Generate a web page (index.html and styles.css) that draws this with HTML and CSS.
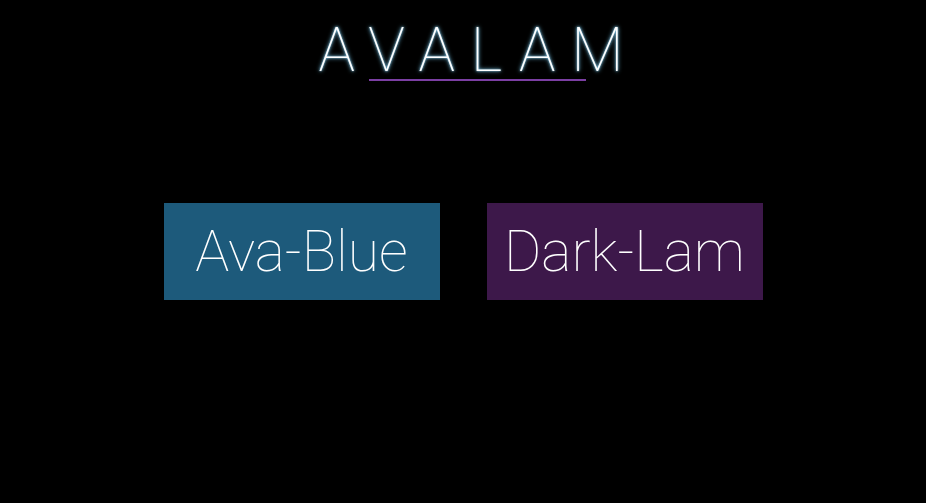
FILE: index.html
```html
<!DOCTYPE html>
<html>
<head>
    <title>Avalam</title>
    <meta name="viewport" content="width=device-width, initial-scale=1.0">
    <link rel="stylesheet" href="styles.css">
</head>
<body>
    <div id="app">
        <header class="title-bar">
            <h1 class="title">AVALAM</h1>
        </header>

        <div class="theme-picker">
            <button class="theme-btn blue">Ava-Blue</button>
            <button class="theme-btn purple">Dark-Lam</button>
        </div>
    </div>
</body>
</html>
```

FILE: styles.css
```css
* {
    box-sizing: border-box;
    margin: 0;
    padding: 0;
}

body {
    font-family: Roboto, "Noto Sans", sans-serif;
    background: #000;
    color: #fff;
    height: 100vh;
    overflow: hidden;
}

#app {
    display: flex;
    flex-direction: column;
    align-items: center;
}

.title-bar {
    padding-top: 20px;
    display: flex;
    flex-direction: column;
    align-items: center;
}

.title {
    font-weight: 100;
    font-size: 61px;
    line-height: 61px;
    letter-spacing: 16px;
    padding-left: 32px;
    color: #fff;
    text-shadow: 0 0 4px #7fd4ff, 0 0 2px #a8e4ff;
}

.title::after {
    content: "";
    display: block;
    width: 217px;
    height: 2px;
    margin: -2px auto 0 51px;
    background: #7b3fa3;
}

.theme-picker {
    display: flex;
    gap: 47px;
    margin-top: 122px;
}

.theme-btn {
    width: 276px;
    height: 97px;
    border: none;
    color: #fff;
    font-family: Roboto, "Noto Sans", sans-serif;
    font-weight: 100;
    font-size: 57px;
    cursor: pointer;
}

.blue {
    background: #1d5a7b;
}

.purple {
    background: #3d184a;
}
```
